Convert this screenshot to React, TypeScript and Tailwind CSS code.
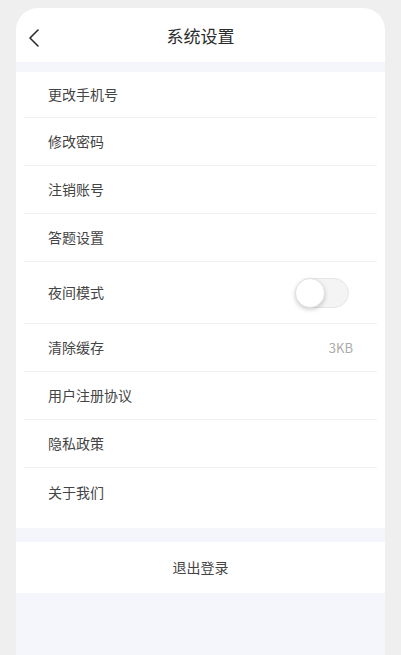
import React, { useState } from "react";

const rows = ["更改手机号", "修改密码", "注销账号", "答题设置"];
const rowsAfter = ["用户注册协议", "隐私政策"];

function Row({ label, className, right }: { label: string; className: string; right?: React.ReactNode }) {
    return (
        <div className={`flex items-center justify-between px-6 ${className}`}>
            <span className="text-[14px] text-[#444]">{label}</span>
            {right}
        </div>
    );
}

function Toggle() {
    const [on, setOn] = useState(false);
    return (
        <button
            onClick={() => setOn(!on)}
            className={`relative w-[54px] h-[30px] rounded-full mr-1 border border-[#e6e6e6] ${on ? "bg-[#4a8cf7]" : "bg-[#f4f4f4]"}`}
        >
            <span
                className={`absolute top-[-1px] w-[30px] h-[30px] rounded-full bg-white shadow-[0_2px_4px_rgba(0,0,0,0.18)] border border-[#e2e2e2] ${on ? "left-[22px]" : "left-[-1px]"}`}
            />
        </button>
    );
}

export default function App() {
    return (
        <div
            className="w-[401px] h-[655px] bg-[#efefef] px-4 pt-2 flex flex-col"
            style={{ fontFamily: '"Noto Sans CJK SC", "Noto Sans", sans-serif' }}
        >
            <div className="flex flex-col flex-1 bg-white rounded-t-[22px] overflow-hidden">
                <div className="relative h-[54px] flex items-center justify-center">
                    <svg className="absolute left-[11px] top-[20px]" width="14" height="20" viewBox="0 0 14 20" fill="none">
                        <path d="M11 2 L3 10 L11 18" stroke="#2a2a2a" strokeWidth="1.6" strokeLinecap="round" strokeLinejoin="round" />
                    </svg>
                    <span className="text-[17px] text-[#2b2b2b] mt-[2px]">系统设置</span>
                </div>
                <div className="h-[10px] bg-[#f4f6fb]" />
                <div className="flex flex-col px-2 pb-3">
                    {rows.map((r, i) => (
                        <Row key={r} label={r} className={`${i === 0 ? "h-[46px]" : "h-12"} border-b border-[#f2f2f2]`} />
                    ))}
                    <Row label="夜间模式" className="h-[62px] border-b border-[#f2f2f2]" right={<Toggle />} />
                    <Row
                        label="清除缓存"
                        className="h-12 border-b border-[#f2f2f2]"
                        right={<span className="text-[13px] text-[#ababab]">3KB</span>}
                    />
                    {rowsAfter.map((r) => (
                        <Row key={r} label={r} className="h-12 border-b border-[#f2f2f2]" />
                    ))}
                    <Row label="关于我们" className="h-12" />
                </div>
                <div className="h-[14px] bg-[#f4f6fb]" />
                <div className="h-[51px] flex items-center justify-center">
                    <span className="text-[14px] text-[#444]">退出登录</span>
                </div>
                <div className="flex-1 bg-[#f4f6fb]" />
            </div>
        </div>
    );
}
